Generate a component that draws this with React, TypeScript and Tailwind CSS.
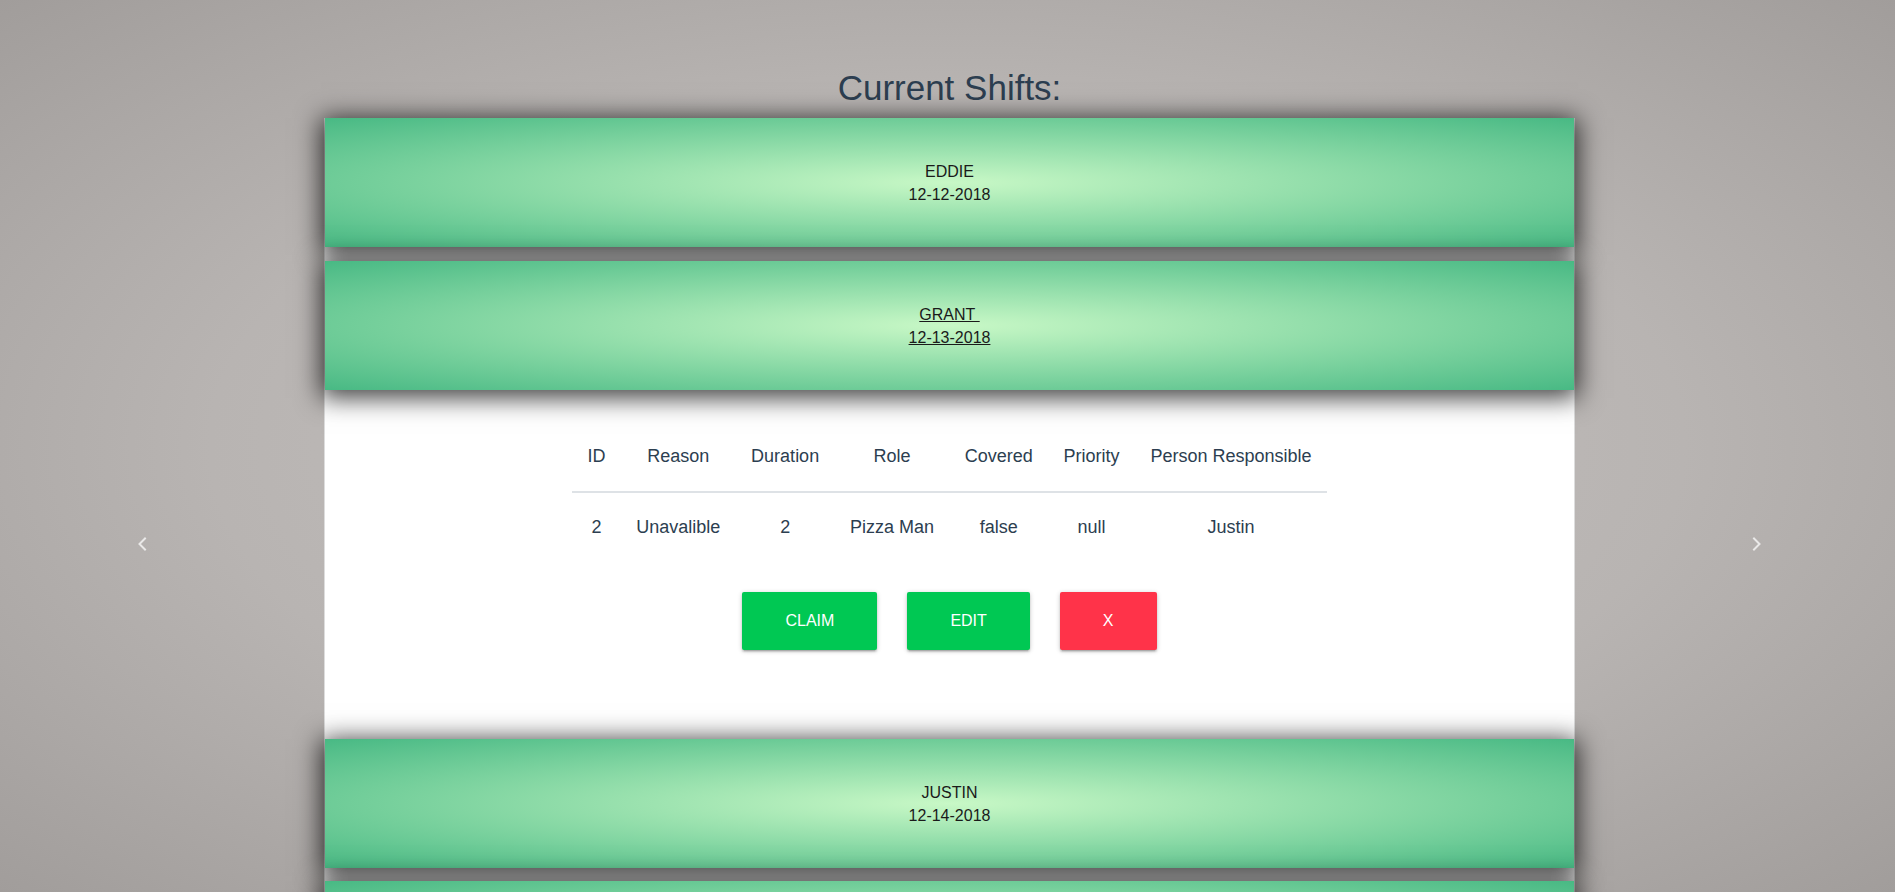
import React from "react";

type Shift = { name: string; date: string; active?: boolean };

const shifts: Shift[] = [
  { name: "EDDIE", date: "12-12-2018" },
  { name: "GRANT\u00a0", date: "12-13-2018", active: true },
  { name: "JUSTIN", date: "12-14-2018" },
  { name: "", date: "" },
];

function Chevron({ dir }: { dir: "left" | "right" }) {
  return (
    <svg width="10" height="14" viewBox="0 0 10 14" fill="none">
      <polyline
        points={dir === "left" ? "8,1.5 2.5,7 8,12.5" : "2,1.5 7.5,7 2,12.5"}
        stroke="rgba(255,255,255,0.72)"
        strokeWidth="2"
        strokeLinecap="square"
      />
    </svg>
  );
}

function Header({ shift }: { shift: Shift }) {
  return (
    <div className="relative z-10 h-[129px] pt-[42px] text-center text-[16px] leading-[23px] text-[#1a1a1a] bg-[radial-gradient(ellipse_at_center,#c8f8c6_0%,#48b984_100%)] shadow-[0_4px_24px_4px_rgba(0,0,0,0.75)]">
      {shift.name && <div className={shift.active ? "underline" : ""}>{shift.name}</div>}
      {shift.date && <div className={shift.active ? "underline" : ""}>{shift.date}</div>}
    </div>
  );
}

const btn =
  "h-[58px] px-[43px] rounded-[2px] text-white text-[16px] uppercase shadow-[0_2px_2px_0_rgba(0,0,0,0.14),0_3px_1px_-2px_rgba(0,0,0,0.12),0_1px_5px_0_rgba(0,0,0,0.2)]";

function Body() {
  const heads = ["ID", "Reason", "Duration", "Role", "Covered", "Priority", "Person Responsible"];
  const row = ["2", "Unavalible", "2", "Pizza Man", "false", "null", "Justin"];
  return (
    <div className="bg-white pt-[32px] pb-[89px]">
      <table className="mx-auto border-collapse text-[18px] text-[#2c3e50]">
        <thead>
          <tr>
            {heads.map((h) => (
              <th
                key={h}
                className="px-[15.4px] py-[20px] leading-[29px] font-normal text-center border-b-2 border-[#dee2e6]"
              >
                {h}
              </th>
            ))}
          </tr>
        </thead>
        <tbody>
          <tr>
            {row.map((c, i) => (
              <td key={i} className="px-[15.4px] py-[20px] leading-[29px] text-center">
                {c}
              </td>
            ))}
          </tr>
        </tbody>
      </table>
      <div className="mt-[30px] flex justify-center gap-[30px]">
        <button className={`${btn} bg-[#00c853]`}>Claim</button>
        <button className={`${btn} bg-[#00c853]`}>Edit</button>
        <button className={`${btn} bg-[#ff3349]`}>X</button>
      </div>
    </div>
  );
}

export default function App() {
  return (
    <div className="relative h-screen overflow-hidden bg-[radial-gradient(ellipse_at_center,#c6c2c0_0%,#b8b4b2_55%,#a19d9b_100%)] font-['Liberation_Sans',Arial,Helvetica,sans-serif] text-[#2c3e50]">
      <div className="pl-[4px]">
        <h1 className="pt-[68px] mb-[11px] text-center text-[35px] leading-[39px] font-normal">
          Current Shifts:
        </h1>
        <ul className="mx-auto w-[1251px] bg-white border-x border-[#ddd]">
          <li>
            <Header shift={shifts[0]} />
          </li>
          <li className="mt-[14px]">
            <Header shift={shifts[1]} />
            <Body />
          </li>
          <li>
            <Header shift={shifts[2]} />
          </li>
          <li className="mt-[13px]">
            <Header shift={shifts[3]} />
          </li>
        </ul>
      </div>
      <div className="absolute left-[137px] top-[537px]">
        <Chevron dir="left" />
      </div>
      <div className="absolute left-[1752px] top-[537px]">
        <Chevron dir="right" />
      </div>
    </div>
  );
}
